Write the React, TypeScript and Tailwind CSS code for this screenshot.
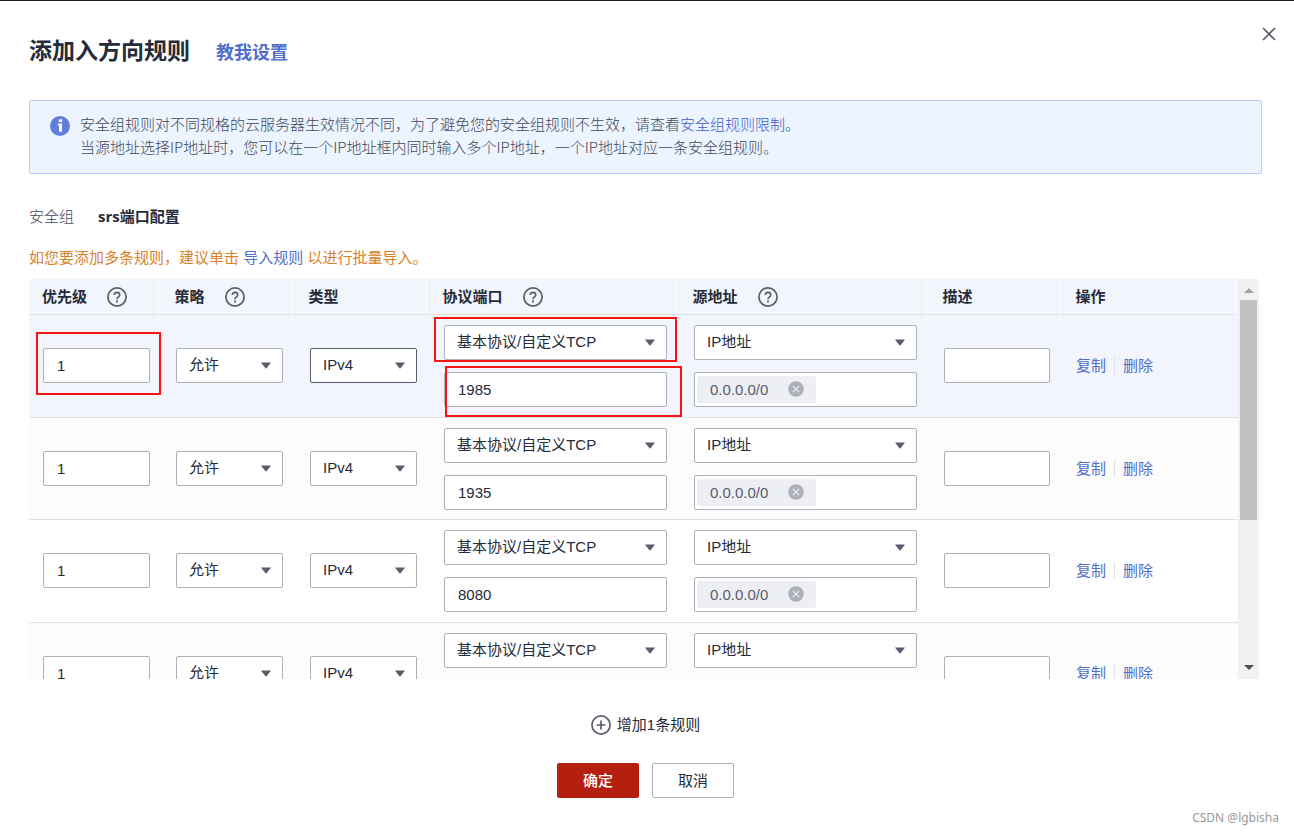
import { useState } from "react";
import type { ReactNode } from "react";
import clsx from "clsx";

interface Rule {
    id: number;
    priority: string;
    port: string;
    source: string;
}

const initialRules: Rule[] = [
    { id: 1, priority: "1", port: "1985", source: "0.0.0.0/0" },
    { id: 2, priority: "1", port: "1935", source: "0.0.0.0/0" },
    { id: 3, priority: "1", port: "8080", source: "0.0.0.0/0" },
    { id: 4, priority: "1", port: "", source: "0.0.0.0/0" },
];

const columns = [
    { title: "优先级", help: true, width: "w-[129px]" },
    { title: "策略", help: true, width: "w-[134px]" },
    { title: "类型", help: false, width: "w-[134px]" },
    { title: "协议端口", help: true, width: "w-[250px]" },
    { title: "源地址", help: true, width: "w-[250px]" },
    { title: "描述", help: false, width: "w-[133px]" },
    { title: "操作", help: false, width: "w-[176px]" },
];

const inputClass =
    "block h-[35px] w-full rounded-xs border border-[#adb0b8] bg-white px-[13px] text-[#252b3a] outline-none";

function HelpIcon() {
    return (
        <svg className="h-5 w-5" viewBox="0 0 20 20" fill="none" stroke="#575d6c">
            <circle cx="10" cy="10" r="9.1" strokeWidth="1.7" />
            <path
                d="M7.3 8.1C7.3 6.4 8.4 5.4 10 5.4s2.7 1 2.7 2.5c0 1.1-.6 1.7-1.5 2.3-.8.6-1.2 1-1.2 2.1"
                strokeWidth="1.6"
            />
            <path d="M10 13.6v1.8" strokeWidth="1.8" />
        </svg>
    );
}

function InfoIcon() {
    return (
        <svg className="mt-1 h-5 w-5 shrink-0" viewBox="0 0 20 20">
            <circle cx="10" cy="10" r="10" fill="#617ddd" />
            <rect x="8.8" y="3.2" width="3.4" height="2.8" rx="0.6" fill="#fff" />
            <path d="M7.8 7.6h4.2v8.2H9V9.6H7.8z" fill="#fff" />
        </svg>
    );
}

function PlusIcon() {
    return (
        <svg className="h-5 w-5" viewBox="0 0 20 20" fill="none" stroke="#575d6c" strokeWidth="1.7">
            <circle cx="10" cy="10" r="9.1" />
            <path d="M10 5.6v8.8M5.6 10h8.8" />
        </svg>
    );
}

interface SelectProps {
    label: string;
    options: string[];
    active?: boolean;
}

function Select({ label, options, active }: SelectProps) {
    return (
        <div className="relative">
            <select
                aria-label={label}
                className={clsx(
                    "block h-[35px] w-full appearance-none rounded-xs border bg-white pr-6 pb-0.5 pl-3 text-[#252b3a] outline-none",
                    active ? "border-[#575d6c]" : "border-[#adb0b8]"
                )}
            >
                {options.map((option) => (
                    <option key={option}>{option}</option>
                ))}
            </select>
            <svg
                className="pointer-events-none absolute top-[14px] right-3 h-[7px] w-[10px]"
                viewBox="0 0 10 7"
                fill="#575d6c"
            >
                <path d="M0.6 0.4h8.8a.4.4 0 0 1 .3.7L5.5 6.2a.7.7 0 0 1-1 0L.3 1.1a.4.4 0 0 1 .3-.7z" />
            </svg>
        </div>
    );
}

function SourceTag({ value }: { value: string }) {
    return (
        <div className="flex h-[35px] items-center rounded-xs border border-[#adb0b8] bg-white px-0.5">
            <span className="flex h-[27px] items-center gap-5 rounded-xs bg-[#eeeff5] pr-3 pl-[13px] text-[#575d6c]">
                {value}
                <button type="button" aria-label="移除">
                    <svg className="block h-4 w-4" viewBox="0 0 16 16">
                        <circle cx="8" cy="8" r="7.8" fill="#adb0b8" />
                        <path d="M4.8 4.8l6.4 6.4M11.2 4.8l-6.4 6.4" stroke="#eeeff5" strokeWidth="1.2" />
                    </svg>
                </button>
            </span>
            <input aria-label="IP地址" className="min-w-0 flex-1 outline-none" />
        </div>
    );
}

function Marked({ show, area, children }: { show: boolean; area: string; children: ReactNode }) {
    return (
        <div className="relative">
            {children}
            {show && <div className={clsx("pointer-events-none absolute z-10 border-2 border-[#f81414]", area)} />}
        </div>
    );
}

function RuleRow({ rule, index }: { rule: Rule; index: number }) {
    const first = index === 0;
    const odd = index % 2 === 1;
    const stackPadding = odd ? "pt-[10px] pb-[9px]" : "py-[10px]";

    return (
        <tr
            className={clsx(
                "border-b border-[#dfe1e6]",
                first ? "bg-[#f2f5fc]" : odd ? "bg-[#fcfcfc]" : "bg-white"
            )}
        >
            <td className="pr-2 pl-[14px]">
                <Marked show={first} area="-top-4 -right-[11px] -bottom-3 -left-[7px]">
                    <input aria-label="优先级" defaultValue={rule.priority} className={inputClass} />
                </Marked>
            </td>
            <td className="pr-[9px] pl-[18px]">
                <Select label="策略" options={["允许", "拒绝"]} />
            </td>
            <td className="pr-[9px] pl-[18px]">
                <Select label="类型" options={["IPv4", "IPv6"]} active={first} />
            </td>
            <td className={clsx("pr-[9px] pl-[18px]", stackPadding)}>
                <div className="flex flex-col gap-3">
                    <Marked show={first} area="-top-2 -right-[10px] -bottom-0.5 -left-[10px]">
                        <Select label="协议" options={["基本协议/自定义TCP", "基本协议/自定义UDP"]} />
                    </Marked>
                    <Marked show={first} area="-top-1.5 -right-[15px] -bottom-[10px] left-px">
                        <input aria-label="端口" defaultValue={rule.port} className={inputClass} />
                    </Marked>
                </div>
            </td>
            <td className={clsx("pr-[9px] pl-[18px]", stackPadding)}>
                <div className="flex flex-col gap-3">
                    <Select label="源地址类型" options={["IP地址", "安全组"]} />
                    <SourceTag value={rule.source} />
                </div>
            </td>
            <td className="pr-[9px] pl-[18px]">
                <input aria-label="描述" className={inputClass} />
            </td>
            <td className="pl-[17px]">
                <div className="flex items-center text-[#526ecc]">
                    <a href="#copy">复制</a>
                    <span className="mx-2 h-[17px] w-px bg-[#dfe1e6]" />
                    <a href="#delete">删除</a>
                </div>
            </td>
            <td />
        </tr>
    );
}

function ScrollBar() {
    return (
        <div className="flex w-[21px] shrink-0 flex-col items-center bg-[#f1f1f1]">
            <svg className="h-[21px] w-[10px] shrink-0" viewBox="0 0 10 21" fill="#a3a3a3">
                <path d="M0 14l5-5 5 5z" />
            </svg>
            <div className="h-[220px] w-[17px] bg-[#c1c1c1]" />
            <svg className="mt-auto h-[21px] w-[10px] shrink-0" viewBox="0 0 10 21" fill="#505050">
                <path d="M0 7l5 5 5-5z" />
            </svg>
        </div>
    );
}

export default function App() {
    const [rules, setRules] = useState(initialRules);

    const addRule = () => {
        setRules([...rules, { id: rules.length + 1, priority: "1", port: "", source: "0.0.0.0/0" }]);
    };

    return (
        <main className="relative min-h-screen border-t border-[#1e1a26] bg-white pr-8 pl-[29px] font-['Liberation_Sans','Noto_Sans_CJK_SC',sans-serif] text-[15px] leading-[23px] text-[#252b3a]">
            <button type="button" aria-label="关闭" className="absolute top-[26px] right-[18px]">
                <svg className="block h-[14px] w-[14px]" viewBox="0 0 14 14" stroke="#575d6c" strokeWidth="1.7">
                    <path d="M1 1l12 12M13 1L1 13" />
                </svg>
            </button>

            <header className="flex items-baseline gap-[26px] pt-8">
                <h1 className="text-[23px] leading-9 font-bold">添加入方向规则</h1>
                <a href="#guide" className="text-lg font-bold text-[#526ecc]">
                    教我设置
                </a>
            </header>

            <div className="mt-[31px] flex gap-[10px] rounded-xs border border-[#bfcbfa] bg-[#ecf4ff] px-5 pt-[11px] pb-[15px] font-light text-[#434959]">
                <InfoIcon />
                <div className="font-['Noto_Sans_CJK_SC',sans-serif]">
                    <p>
                        安全组规则对不同规格的云服务器生效情况不同，为了避免您的安全组规则不生效，请查看
                        <a href="#limits" className="text-[#3f5dc8]">
                            安全组规则限制
                        </a>
                        。
                    </p>
                    <p>当源地址选择IP地址时，您可以在一个IP地址框内同时输入多个IP地址，一个IP地址对应一条安全组规则。</p>
                </div>
            </div>

            <div className="mt-[31px] flex gap-6">
                <span className="font-light text-[#434959]">安全组</span>
                <span className="font-['Open_Sans','Noto_Sans_CJK_SC',sans-serif] font-bold">srs端口配置</span>
            </div>

            <p className="mt-[18px] text-[#d9822b]">
                如您要添加多条规则，建议单击{" "}
                <a href="#import" className="text-[#526ecc]">
                    导入规则
                </a>{" "}
                以进行批量导入。
            </p>

            <div className="mt-[10px] mr-[3px] flex h-[400px]">
                <div className="min-w-0 flex-1 overflow-y-auto [scrollbar-width:none]">
                    <table className="w-full table-fixed border-collapse text-left">
                        <thead>
                            <tr className="h-[35px] border-b border-[#dfe1e6] bg-[#f2f5fc]">
                                {columns.map((column, index) => (
                                    <th
                                        key={column.title}
                                        className={clsx(
                                            "border-r border-white p-0 pt-px font-bold",
                                            column.width,
                                            index === 0 ? "pl-[13px]" : "pl-4"
                                        )}
                                    >
                                        <span className="flex items-center gap-5">
                                            {column.title}
                                            {column.help && <HelpIcon />}
                                        </span>
                                    </th>
                                ))}
                                <th className="w-[3px] p-0" />
                            </tr>
                        </thead>
                        <tbody>
                            {rules.map((rule, index) => (
                                <RuleRow key={rule.id} rule={rule} index={index} />
                            ))}
                        </tbody>
                    </table>
                </div>
                <ScrollBar />
            </div>

            <div className="mt-[34px] flex justify-center">
                <button type="button" onClick={addRule} className="flex items-center gap-1.5">
                    <PlusIcon />
                    增加1条规则
                </button>
            </div>

            <div className="mt-[27px] flex justify-center gap-[13px]">
                <button type="button" className="h-[35px] w-[82px] rounded-xs bg-[#b41f10] font-medium text-white">
                    确定
                </button>
                <button type="button" className="h-[35px] w-[82px] rounded-xs border border-[#adb0b8] bg-white">
                    取消
                </button>
            </div>

            <div className="absolute right-[15px] bottom-2 font-['Noto_Sans',sans-serif] text-xs leading-4 text-[#999]">
                CSDN @lgbisha
            </div>
        </main>
    );
}
